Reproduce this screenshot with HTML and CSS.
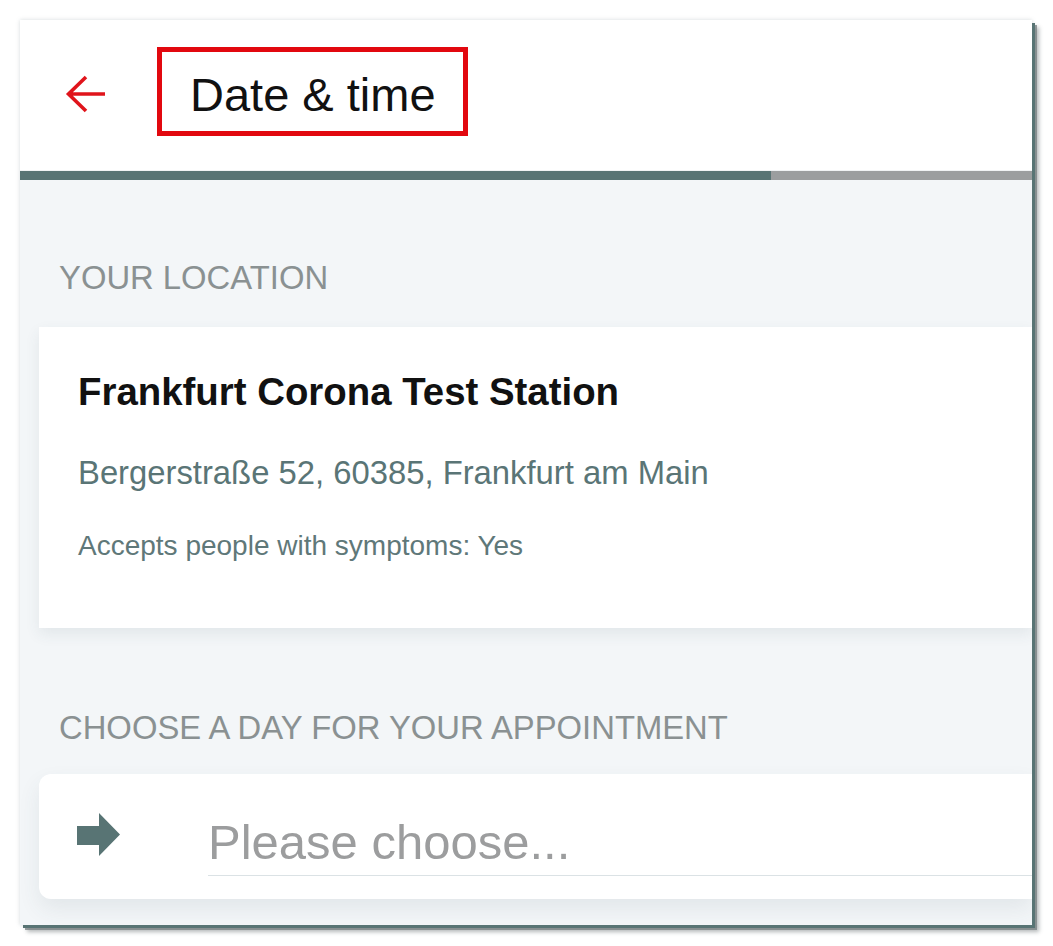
FILE: index.html
```html
<!DOCTYPE html>
<html lang="en">
<head>
<meta charset="utf-8">
<title>Date &amp; time</title>
<link rel="stylesheet" href="styles.css">
</head>
<body>
<div class="frame">
  <header class="header">
    <svg class="back" width="44" height="44" viewBox="0 0 44 44" aria-hidden="true">
      <path d="M41 21 H5 M22 4 L4.5 21 L22 38" fill="none" stroke="#e0141b" stroke-width="3.6" stroke-linejoin="miter"/>
    </svg>
    <div class="title-box"><h1 class="title">Date &amp; time</h1></div>
  </header>
  <div class="progress"><div class="progress-fill"></div></div>
  <main class="content">
    <h2 class="section-label first">YOUR LOCATION</h2>
    <section class="location-card">
      <h3 class="loc-name">Frankfurt Corona Test Station</h3>
      <p class="loc-address">Bergerstraße 52, 60385, Frankfurt am Main</p>
      <p class="loc-note">Accepts people with symptoms: Yes</p>
    </section>
    <h2 class="section-label second">CHOOSE A DAY FOR YOUR APPOINTMENT</h2>
    <section class="day-card">
      <svg class="day-icon" width="43" height="43" viewBox="0 0 43 43" aria-hidden="true">
        <path d="M0 13 H22 V0 L43 21.5 L22 43 V32 H0 Z" fill="#587474"/>
      </svg>
      <div class="day-input">Please choose...</div>
    </section>
  </main>
</div>
</body>
</html>
```

FILE: styles.css
```css
* { box-sizing: border-box; }

html, body {
  margin: 0;
  padding: 0;
  background: #ffffff;
  font-family: "Liberation Sans", Arial, sans-serif;
}

body {
  min-height: 946px;
  padding: 20px 0 21px 20px;
}

.frame {
  width: 1012px;
  height: 905px;
  overflow: hidden;
  background: #f3f6f8;
  box-shadow: 3px 3px 0 #587474, 5px 5px 0 rgba(120, 128, 130, 0.75), 7px 7px 4px rgba(90, 100, 102, 0.45), 0 0 4px rgba(120, 135, 140, 0.3);
}

.header {
  height: 151px;
  background: #ffffff;
  display: flex;
  align-items: center;
  padding-left: 44px;
  border-bottom: 1px solid #f0f3f4;
}

.back {
  display: block;
  flex: none;
}

.title-box {
  margin-left: 49px;
  margin-bottom: 8px;
  border: 5px solid #e2080f;
  height: 89px;
  padding: 6px 27px 0 28px;
}

.title {
  margin: 0;
  font-size: 47px;
  line-height: 73px;
  font-weight: 400;
  color: #111111;
}

.progress {
  height: 9px;
  background: #9b9e9f;
}

.progress-fill {
  width: 751px;
  height: 100%;
  background: #587474;
}

.content {
  padding: 0 0 0 19px;
}

.section-label {
  margin: 0;
  padding-left: 20px;
  font-size: 32.8px;
  line-height: 37px;
  font-weight: 400;
  color: #8a9192;
  white-space: nowrap;
}

.section-label.first {
  margin-top: 79px;
  margin-bottom: 31px;
}

.section-label.second {
  margin-top: 81px;
  margin-bottom: 28px;
}

.location-card {
  height: 301px;
  background: #ffffff;
  padding: 43px 0 0 39px;
  box-shadow: 0 6px 14px rgba(60, 80, 90, 0.09);
}

.loc-name {
  margin: 0;
  font-size: 38.4px;
  line-height: 44px;
  font-weight: 700;
  color: #111111;
}

.loc-address {
  margin: 40px 0 0;
  font-size: 32.8px;
  line-height: 37px;
  color: #5a7576;
}

.loc-note {
  margin: 39px 0 0;
  font-size: 28px;
  line-height: 31px;
  color: #5f7879;
}

.day-card {
  height: 125px;
  background: #ffffff;
  border-radius: 12px 0 0 12px;
  display: flex;
  align-items: flex-start;
  padding-left: 38px;
  box-shadow: 0 10px 22px rgba(60, 80, 90, 0.09);
}

.day-icon {
  display: block;
  flex: none;
  margin-top: 39px;
}

.day-input {
  flex: 1;
  margin-left: 88px;
  margin-top: 40px;
  padding-bottom: 5px;
  font-size: 49px;
  line-height: 56px;
  color: #9c9d9e;
  border-bottom: 1px solid #dbe2e5;
  white-space: nowrap;
}
```
